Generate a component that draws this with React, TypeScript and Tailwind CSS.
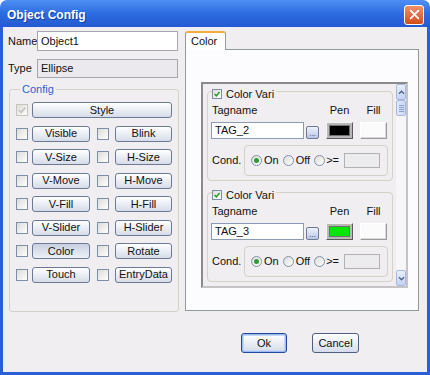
import React from "react";

const ui = "font-['Liberation_Sans',Arial,sans-serif] text-[11px] leading-[13px] text-[#111]";

function Box({ checked = false, disabled = false, small = false }: { checked?: boolean; disabled?: boolean; small?: boolean }) {
    return (
        <span
            className={`${small ? "w-[10px] h-[10px]" : "w-[12px] h-[12px]"} ${
                disabled ? "border-[#c6c4bc]" : "border-[#7d8ea8]"
            } flex shrink-0 items-center justify-center border bg-linear-to-br from-[#dddcd6] to-white`}
        >
            {checked && (
                <svg viewBox="0 0 10 10" className="w-full h-full">
                    <path d="M2 5 L4.2 7.3 L8.2 2.6" fill="none" stroke={disabled ? "#c4c4c4" : "#21a121"} strokeWidth="1.8" />
                </svg>
            )}
        </span>
    );
}

function Btn({ label, className, pressed = false }: { label: string; className: string; pressed?: boolean }) {
    return (
        <div
            className={`${className} h-[16px] flex items-center justify-center rounded-[3px] border border-[#6c7a96] ${
                pressed ? "bg-linear-to-b from-[#c8d0e0] to-[#eef1f6]" : "bg-linear-to-b from-white to-[#d6dce8]"
            }`}
        >
            {label}
        </div>
    );
}

function Radio({ on = false }: { on?: boolean }) {
    return (
        <span className="w-[11px] h-[11px] shrink-0 rounded-full border border-[#8191aa] bg-linear-to-br from-[#dcdcd6] to-white flex items-center justify-center">
            {on && <span className="w-[5px] h-[5px] rounded-full bg-[#2f9a3a]" />}
        </span>
    );
}

function ColorVari({ tag, pen, first = false }: { tag: string; pen: string; first?: boolean }) {
    return (
        <div className={`${first ? "" : "mt-[11px]"} h-[90px] border border-[#d3d1c8] rounded-[4px] pl-[3px] pr-[4px] flex flex-col`}>
            <div className="-mt-[4px] ml-[1px] h-[12px] self-start flex items-center gap-[4px] bg-[#f0eef1] pr-[2px]">
                <Box checked small />
                <span>Color Vari</span>
            </div>
            <div className="mt-[4px] h-[13px] flex items-center">
                <span className="flex-1 pl-[1px]">Tagname</span>
                <span className="w-[27px] text-center">Pen</span>
                <span className="w-[27px] ml-[7px] mr-[1px] text-center">Fill</span>
            </div>
            <div className="mt-[5px] h-[17px] flex">
                <div className="w-[93px] h-[17px] border border-[#8b9bb5] bg-white pl-[3px] flex items-center">{tag}</div>
                <div className="ml-[2px] self-end w-[13px] h-[13px] rounded-[2px] border border-[#6c7a96] bg-linear-to-b from-[#eef2fb] to-[#b9c7e6] flex items-end justify-center text-[8px] leading-[9px] text-[#2a3a6a]">
                    ...
                </div>
                <span className="ml-[7px] w-[27px] h-[17px] border border-t-[#f4f4f4] border-l-[#f4f4f4] border-r-[#5a5a5a] border-b-[#5a5a5a] bg-[#b8b8b8] p-[2px]">
                    <span className={`block w-full h-full border border-[#707070] ${pen}`} />
                </span>
                <span className="ml-[7px] w-[27px] h-[17px] border border-t-white border-l-white border-r-[#9a9a9a] border-b-[#9a9a9a] bg-[#fbfbfb] shadow-[inset_-1px_-1px_0_#d8d8d8]" />
            </div>
            <div className="mt-[6px] flex items-center">
                <span className="w-[33px] pl-[1px]">Cond.</span>
                <div className="w-[144px] h-[31px] border border-[#d3d1c8] rounded-[4px] pl-[6px] flex items-center">
                    <Radio on />
                    <span className="ml-[2px]">On</span>
                    <span className="ml-[4px]">
                        <Radio />
                    </span>
                    <span className="ml-[2px]">Off</span>
                    <span className="ml-[4px]">
                        <Radio />
                    </span>
                    <span className="ml-[1px]">&gt;=</span>
                    <div className="ml-[5px] w-[36px] h-[15px] border border-[#b2b0b6] bg-[#ecebee]" />
                </div>
            </div>
        </div>
    );
}

function Arrow({ up }: { up: boolean }) {
    return (
        <div className="h-[16px] shrink-0 rounded-[2px] border border-[#a9b9de] bg-linear-to-b from-[#e8effc] to-[#c3d2f4] flex items-center justify-center">
            <svg viewBox="0 0 8 6" className="w-[7px] h-[5px]">
                <path d={up ? "M1 4.5 L4 1.5 L7 4.5" : "M1 1.5 L4 4.5 L7 1.5"} fill="none" stroke="#4d6185" strokeWidth="1.6" />
            </svg>
        </div>
    );
}

const rows: [string, string][] = [
    ["Visible", "Blink"],
    ["V-Size", "H-Size"],
    ["V-Move", "H-Move"],
    ["V-Fill", "H-Fill"],
    ["V-Slider", "H-Slider"],
    ["Color", "Rotate"],
    ["Touch", "EntryData"],
];

export default function App() {
    return (
        <div className={`w-[430px] h-[375px] flex flex-col rounded-t-[7px] overflow-hidden ${ui}`}>
            {/* title bar */}
            <div className="h-[27px] shrink-0 flex items-center justify-between pl-[7px] pr-[6px] bg-linear-to-b from-[#4f8ff3] via-[#2d6ce0] to-[#2459d2]">
                <span className="pt-[2px] text-white font-bold text-[12px] leading-none [text-shadow:1px_1px_0_#143f9e]">Object Config</span>
                <div className="mt-[2px] w-[20px] h-[20px] rounded-[3px] border border-white bg-linear-to-b from-[#f29066] to-[#d24b1a] flex items-center justify-center">
                    <svg viewBox="0 0 20 20" className="w-[11px] h-[11px]">
                        <path d="M3 3 L17 17 M17 3 L3 17" stroke="white" strokeWidth="3.2" strokeLinecap="round" />
                    </svg>
                </div>
            </div>

            <div className="flex-1 flex flex-col border-x-[3px] border-b-[3px] border-[#2a60d6] bg-[#f0eef1]">
                <div className="h-[285px] shrink-0 flex gap-[7px] pl-[5px] pt-[4px]">
                    {/* left column */}
                    <div className="w-[170px] flex flex-col">
                        <div className="h-[20px] flex items-center">
                            <span className="w-[29px] overflow-hidden whitespace-nowrap">Name</span>
                            <div className="w-[141px] h-[20px] border border-[#a7a6aa] bg-white pl-[3px] flex items-center">Object1</div>
                        </div>
                        <div className="mt-[8px] h-[19px] flex items-center">
                            <span className="w-[29px]">Type</span>
                            <div className="w-[141px] h-[19px] border border-[#a7a6aa] bg-[#ebe9ed] pl-[3px] flex items-center">Ellipse</div>
                        </div>
                        <fieldset className="mt-[5px] ml-[1px] w-[170px] h-[229px] border border-[#d3d1c8] rounded-[3px] pl-[6px] pr-[5px] pt-[6px]">
                            <legend className="ml-[4px] px-[2px] text-[#3461cf]">Config</legend>
                            <div className="flex flex-col gap-[7.5px]">
                                <div className="flex items-center">
                                    <Box checked disabled />
                                    <Btn label="Style" className="ml-[4px] w-[140px]" />
                                </div>
                                {rows.map(([a, b]) => (
                                    <div key={a} className="flex items-center">
                                        <Box />
                                        <Btn label={a} className="ml-[4px] w-[58px]" pressed={a === "Color"} />
                                        <span className="ml-[7px]">
                                            <Box />
                                        </span>
                                        <Btn label={b} className="ml-[6px] w-[57px]" />
                                    </div>
                                ))}
                            </div>
                        </fieldset>
                    </div>

                    {/* right column */}
                    <div className="w-[234px] flex flex-col">
                        <div className="flex">
                            <div className="relative z-10 -mb-px w-[41px] h-[19px] rounded-t-[3px] border border-b-0 border-[#919b9c] border-t-2 border-t-[#f2ac3c] bg-white pl-[5px] pt-[2px]">
                                Color
                            </div>
                        </div>
                        <div className="h-[262px] border border-[#919b9c] bg-[#fcfcfe] pl-[15px] pt-[32px]">
                            <div className="w-[207px] h-[206px] border-2 border-t-[#8a8a8a] border-l-[#8a8a8a] border-r-[#c4c4c4] border-b-[#c4c4c4] bg-[#f0eef1] flex">
                                <div className="flex-1 flex flex-col pl-[4px] pr-[3px] pt-[7px]">
                                    <ColorVari tag="TAG_2" pen="bg-black" first />
                                    <ColorVari tag="TAG_3" pen="bg-[#06e606]" />
                                </div>
                                <div className="w-[10px] flex flex-col bg-[#f6f6f9]">
                                    <Arrow up />
                                    <div className="h-[16px] rounded-[2px] border border-[#a9b9de] bg-linear-to-r from-[#dfe8fb] to-[#c9d7f6] flex flex-col items-center justify-center gap-[1px]">
                                        <span className="w-[5px] h-px bg-[#8ea0c8]" />
                                        <span className="w-[5px] h-px bg-[#8ea0c8]" />
                                        <span className="w-[5px] h-px bg-[#8ea0c8]" />
                                        <span className="w-[5px] h-px bg-[#8ea0c8]" />
                                    </div>
                                    <div className="flex-1" />
                                    <Arrow up={false} />
                                </div>
                            </div>
                        </div>
                    </div>
                </div>

                <div className="flex justify-end gap-[25px] pr-[68px] pt-[21px]">
                    <div className="w-[46px] h-[20px] rounded-[3px] border border-[#1f4a9c] bg-linear-to-b from-white to-[#d6dce8] shadow-[inset_0_0_0_1px_#9dbbf2,inset_0_0_0_2px_#c6d8f8] flex items-center justify-center">
                        Ok
                    </div>
                    <div className="w-[47px] h-[20px] rounded-[3px] border border-[#4e5f80] bg-linear-to-b from-white to-[#d6dce8] flex items-center justify-center">
                        Cancel
                    </div>
                </div>
            </div>
        </div>
    );
}
